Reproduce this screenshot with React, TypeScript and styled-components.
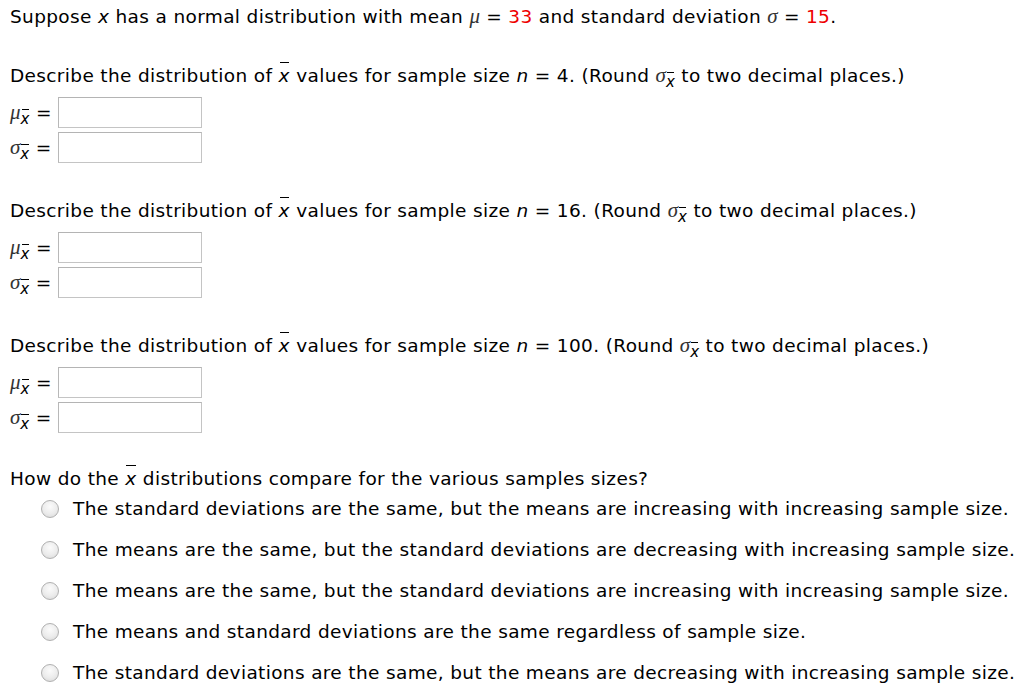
import React from "react";
import styled, { createGlobalStyle } from "styled-components";

const Global = createGlobalStyle`
  html, body { margin: 0; padding: 0; background: #fff; }
  body { font-family: "DejaVu Sans", Verdana, sans-serif; color: #000; }
`;

const Page = styled.div`
  padding: 5px 0 0 10px;
  font-size: 18.5px;
  letter-spacing: 0.35px;
  line-height: 22px;
`;

const Line = styled.div<{ $top?: number }>`
  margin-top: ${(p) => p.$top ?? 0}px;
  white-space: nowrap;
`;

const Red = styled.span`
  color: #ee0000;
`;

const Greek = styled.span`
  font-family: "Liberation Serif", "DejaVu Serif", serif;
  font-style: italic;
  font-size: 21px;
  letter-spacing: 0;
  color: #333;
`;

const Ital = styled.span`
  font-style: italic;
`;

const Bar = styled.span`
  position: relative;
  font-style: italic;
  &::before {
    content: "";
    position: absolute;
    left: 1px;
    right: 1px;
    top: -3px;
    border-top: 1.5px solid #000;
  }
`;

const Sub = styled.span`
  position: relative;
  top: 5px;
  font-size: 15px;
  font-style: italic;
  &::before {
    content: "";
    position: absolute;
    left: 1px;
    right: 1px;
    top: -1px;
    border-top: 1.5px solid #000;
  }
`;

const Fields = styled.div`
  display: grid;
  grid-template-columns: 48px 144px;
  row-gap: 4px;
  margin-top: 9px;
  align-items: center;
`;

const Label = styled.div`
  white-space: nowrap;
`;

const Box = styled.div`
  height: 29px;
  border: 1px solid #c4c4c4;
  border-top-color: #b4b4b4;
  border-left-color: #b8b8b8;
  background: #fff;
`;

const Options = styled.div`
  display: flex;
  flex-direction: column;
  gap: 19px;
  margin-top: 8px;
  padding-left: 31px;
`;

const Option = styled.label`
  display: flex;
  align-items: center;
  gap: 14px;
  white-space: nowrap;
`;

const Radio = styled.span`
  width: 16px;
  height: 16px;
  border-radius: 50%;
  border: 1px solid #b0b0b0;
  background: radial-gradient(circle at 50% 35%, #fbfbfb 0%, #ececec 55%, #d6d6d6 100%);
  flex: none;
`;

const Xbar = () => <Bar>x</Bar>;

const SubLabel = ({ sym }: { sym: string }) => (
  <Label>
    <Greek>{sym}</Greek>
    <Sub>x</Sub> =
  </Label>
);

const Section = ({ n, top }: { n: string; top: number }) => (
  <>
    <Line $top={top}>
      Describe the distribution of <Xbar /> values for sample size <Ital>n</Ital> = {n}. (Round{" "}
      <Greek>σ</Greek>
      <Sub>x</Sub> to two decimal places.)
    </Line>
    <Fields>
      <SubLabel sym="μ" />
      <Box />
      <SubLabel sym="σ" />
      <Box />
    </Fields>
  </>
);

const options = [
  "The standard deviations are the same, but the means are increasing with increasing sample size.",
  "The means are the same, but the standard deviations are decreasing with increasing sample size.",
  "The means are the same, but the standard deviations are increasing with increasing sample size.",
  "The means and standard deviations are the same regardless of sample size.",
  "The standard deviations are the same, but the means are decreasing with increasing sample size.",
];

export default function App() {
  return (
    <Page>
      <Global />
      <Line>
        Suppose <Ital>x</Ital> has a normal distribution with mean <Greek>μ</Greek> = <Red>33</Red> and standard
        deviation <Greek>σ</Greek> = <Red>15</Red>.
      </Line>
      <Section n="4" top={36} />
      <Section n="16" top={36} />
      <Section n="100" top={36} />
      <Line $top={35}>
        How do the <Xbar /> distributions compare for the various samples sizes?
      </Line>
      <Options>
        {options.map((o) => (
          <Option key={o}>
            <Radio />
            {o}
          </Option>
        ))}
      </Options>
    </Page>
  );
}
